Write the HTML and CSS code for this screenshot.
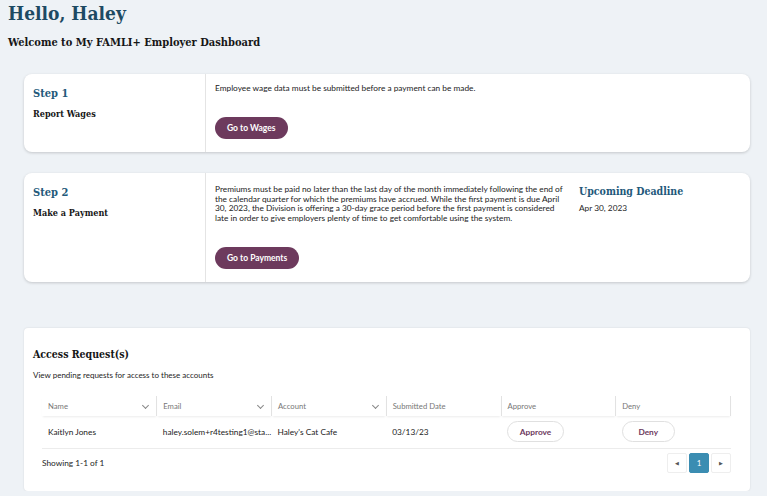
FILE: index.html
```html
<!DOCTYPE html>
<html lang="en">
<head>
    <meta charset="UTF-8">
    <meta name="viewport" content="width=device-width, initial-scale=1.0">
    <title>Employer Dashboard</title>
    <link rel="stylesheet" href="styles.css">
</head>
<body>
    <main class="page">
        <h1 class="greeting">Hello, Haley</h1>
        <h2 class="welcome">Welcome to My FAMLI+ Employer Dashboard</h2>

        <section class="step-card">
            <div class="step-side">
                <p class="step-num">Step 1</p>
                <p class="step-title">Report Wages</p>
            </div>
            <div class="step-body">
                <div class="step-main">
                    <p class="step-text">Employee wage data must be submitted before a payment can be made.</p>
                    <button class="btn-primary">Go to Wages</button>
                </div>
            </div>
        </section>

        <section class="step-card">
            <div class="step-side">
                <p class="step-num">Step 2</p>
                <p class="step-title">Make a Payment</p>
            </div>
            <div class="step-body">
                <div class="step-main">
                    <p class="step-text long">Premiums must be paid no later than the last day of the month immediately following the end of the calendar quarter for which the premiums have accrued. While the first payment is due April 30, 2023, the Division is offering a 30-day grace period before the first payment is considered late in order to give employers plenty of time to get comfortable using the system.</p>
                    <button class="btn-primary">Go to Payments</button>
                </div>
                <div class="deadline">
                    <p class="deadline-title">Upcoming Deadline</p>
                    <p class="deadline-date">Apr 30, 2023</p>
                </div>
            </div>
        </section>

        <section class="access-card">
            <h3 class="access-title">Access Request(s)</h3>
            <p class="access-sub">View pending requests for access to these accounts</p>

            <table class="req-table">
                <thead>
                    <tr>
                        <th><span>Name</span><span class="chev"></span></th>
                        <th><span>Email</span><span class="chev"></span></th>
                        <th><span>Account</span><span class="chev"></span></th>
                        <th>Submitted Date</th>
                        <th>Approve</th>
                        <th>Deny</th>
                    </tr>
                </thead>
                <tbody>
                    <tr>
                        <td>Kaitlyn Jones</td>
                        <td>haley.solem+r4testing1@sta...</td>
                        <td>Haley's Cat Cafe</td>
                        <td>03/13/23</td>
                        <td><button class="btn-ghost btn-approve">Approve</button></td>
                        <td><button class="btn-ghost btn-deny">Deny</button></td>
                    </tr>
                </tbody>
            </table>

            <div class="table-foot">
                <span>Showing 1-1 of 1</span>
                <div class="pager">
                    <button class="pg">&#9664;</button>
                    <button class="pg active">1</button>
                    <button class="pg">&#9654;</button>
                </div>
            </div>
        </section>
    </main>
</body>
</html>
```

FILE: styles.css
```css
body {
    margin: 0;
    padding: 0;
    background-color: #eef2f6;
    font-family: Lato, "Liberation Sans", sans-serif;
    color: #1e1e1e;
}

.page {
    padding: 0 17px 0 24px;
}

p {
    margin: 0;
}

.greeting {
    font-family: "DejaVu Serif Condensed", "DejaVu Serif", serif;
    font-size: 19px;
    font-weight: bold;
    color: #1d4a63;
    margin: 0 0 0 -16px;
    padding-top: 1px;
    line-height: 24px;
}

.welcome {
    font-family: "DejaVu Serif Condensed", "DejaVu Serif", serif;
    font-size: 11px;
    font-weight: bold;
    color: #161616;
    margin: 10px 0 0 -16px;
    line-height: 16px;
}

/* step cards */
.step-card {
    display: flex;
    background-color: #fff;
    border-radius: 8px;
    box-shadow: 0 1px 3px rgba(0, 0, 0, 0.18);
    margin-top: 23px;
}

.step-card + .step-card {
    margin-top: 21px;
}

.step-side {
    width: 172px;
    padding: 12px 0 0 9px;
    border-right: 1px solid #e4e4e4;
}

.step-num {
    font-family: "DejaVu Serif Condensed", "DejaVu Serif", serif;
    font-size: 11px;
    font-weight: bold;
    color: #23597a;
    line-height: 16px;
}

.step-title {
    font-family: "DejaVu Serif Condensed", "DejaVu Serif", serif;
    font-size: 9px;
    font-weight: bold;
    color: #161616;
    margin-top: 7px;
}

.step-body {
    flex: 1;
    display: flex;
    gap: 13px;
    padding: 10px 10px 13px 9px;
}

.step-main {
    width: 351px;
}

.step-text {
    font-size: 8.3px;
    line-height: 9.8px;
    color: #222;
}

.step-text.long {
    padding-top: 2px;
    margin-bottom: 9px;
}

.btn-primary {
    display: block;
    margin-top: 23px;
    height: 22px;
    padding: 0 12px;
    border: none;
    border-radius: 11px;
    background-color: #6d3a5d;
    color: #fff;
    font-family: Lato, sans-serif;
    font-size: 8.5px;
    font-weight: bold;
}

.deadline {
    padding-top: 2px;
}

.deadline-title {
    font-family: "DejaVu Serif Condensed", "DejaVu Serif", serif;
    font-size: 10.5px;
    font-weight: bold;
    color: #22587a;
}

.deadline-date {
    font-size: 8.3px;
    margin-top: 6px;
}

/* access requests */
.access-card {
    background-color: #fff;
    border-radius: 4px;
    box-shadow: 0 0 2px rgba(0, 0, 0, 0.12);
    margin-top: 46px;
    padding: 18px 19px 18px 9px;
}

.access-title {
    font-family: "DejaVu Serif Condensed", "DejaVu Serif", serif;
    font-size: 10.5px;
    font-weight: bold;
    color: #161616;
    margin: 0;
    line-height: 16px;
}

.access-sub {
    font-size: 8px;
    margin-top: 8px;
}

.req-table {
    width: calc(100% - 9px);
    margin: 16px 0 0 9px;
    border-collapse: collapse;
    table-layout: fixed;
    font-size: 8.3px;
}

.req-table th {
    height: 20px;
    padding: 0 6px;
    text-align: left;
    font-weight: normal;
    color: #777;
    font-size: 7.7px;
    border-right: 1px solid #e2e2e2;
    box-shadow: 0 2px 2px -1px rgba(0, 0, 0, 0.08);
}

.req-table th .chev {
    float: right;
    width: 4px;
    height: 4px;
    margin-top: 2px;
    margin-right: 2px;
    border-right: 1px solid #888;
    border-bottom: 1px solid #888;
    transform: rotate(45deg);
}

.req-table td {
    height: 32px;
    padding: 0 6px;
    border-bottom: 1px solid #ececec;
    white-space: nowrap;
    overflow: hidden;
    color: #222;
}

.btn-ghost {
    height: 21px;
    border: 1px solid #e0e0e0;
    border-radius: 11px;
    background-color: #fff;
    color: #6d3a5d;
    font-family: Lato, sans-serif;
    font-size: 8.3px;
    font-weight: bold;
}

.btn-approve {
    width: 57px;
}

.btn-deny {
    width: 53px;
}

.table-foot {
    display: flex;
    justify-content: space-between;
    align-items: center;
    margin: 4px 0 0 9px;
    font-size: 8.3px;
}

.pager {
    display: flex;
    gap: 2px;
}

.pg {
    width: 20px;
    height: 20px;
    padding: 0;
    border: 1px solid #eee;
    border-radius: 2px;
    background-color: #fff;
    color: #555;
    font-size: 5px;
}

.pg.active {
    background-color: #3b8db2;
    border-color: #3b8db2;
    color: #fff;
    font-size: 8px;
    font-family: Lato, sans-serif;
}
```
